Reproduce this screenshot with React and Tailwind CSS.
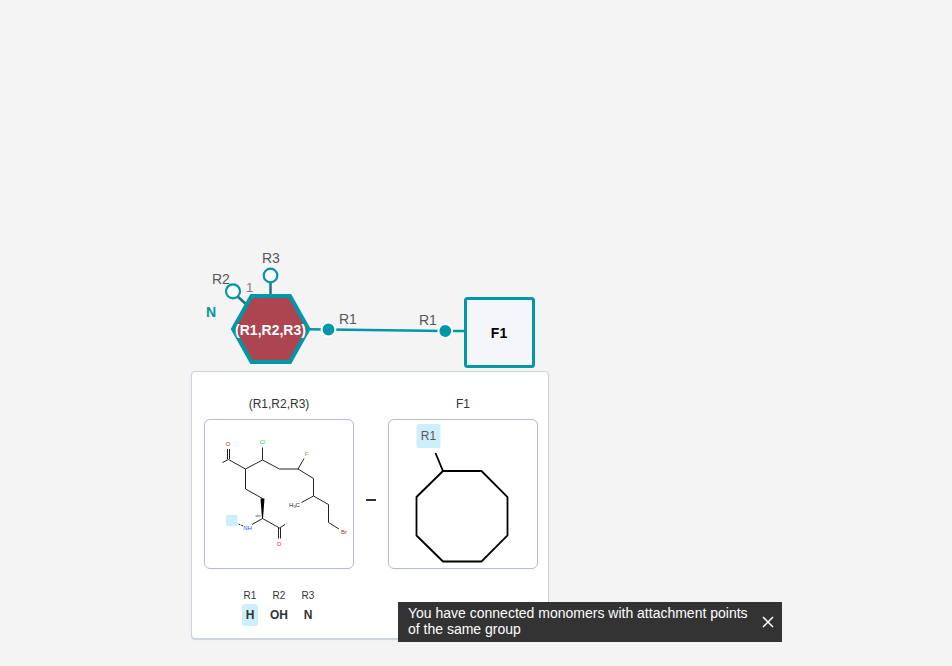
import React from 'react';

const font = 'font-["Liberation_Sans",Arial,sans-serif]';

const attachmentPoints = [
  { name: 'R1', group: 'H', active: true },
  { name: 'R2', group: 'OH', active: false },
  { name: 'R3', group: 'N', active: false },
];

function MonomerCanvas() {
  return (
    <svg className="absolute top-0 left-0 h-[380px] w-[560px]" viewBox="0 0 560 380" role="img" aria-label="Connected monomers">
      <g fill="none" stroke="#0097a8" strokeWidth="2.5">
        <path d="M307 329.300 L328 329.500 L445 331 H466" />
        <path d="M270.500 296 V280 M247 305 L236 295" stroke="#1d7584" />
        <circle cx="270.500" cy="275.500" r="6.800" fill="#fff" strokeWidth="2.200" />
        <circle cx="233" cy="291.300" r="7" fill="#fff" strokeWidth="2.200" />
      </g>
      <path d="M233 329 L251.500 296 H290 L308.500 329 L290 362 H251.500 Z" fill="#ad4551" stroke="#0097a8" strokeWidth="4" />
      <rect x="465.500" y="298.500" width="68" height="68" rx="2" fill="#f5f6f9" stroke="#0097a8" strokeWidth="3" />
      <g fill="#0097a8" stroke="#fff" strokeWidth="2">
        <circle cx="328.500" cy="329.500" r="6.900" />
        <circle cx="445.300" cy="331" r="6.900" />
      </g>
      <g fontSize="14" fill="#585858">
        <text x="262" y="263">R3</text>
        <text x="212" y="284">R2</text>
        <text x="339" y="324">R1</text>
        <text x="419" y="325">R1</text>
      </g>
      <text x="246" y="292" fontSize="13" fill="#7c7c7c">1</text>
      <g fontSize="14" fontWeight="700">
        <text x="206" y="317" fill="#0097a8">N</text>
        <text x="270.500" y="335" textAnchor="middle" fill="#fff">(R1,R2,R3)</text>
        <text x="499" y="338" textAnchor="middle" fill="#000">F1</text>
      </g>
    </svg>
  );
}

function ChainMolecule() {
  return (
    <svg className="size-full" viewBox="205 420 148 148" role="img" aria-label="Structure of (R1,R2,R3)">
      <rect x="226" y="515" width="11.500" height="11" rx="1" fill="#cceffb" />
      <g fill="none" stroke="#222" strokeWidth="1">
        <path d="M222.500 462.500 L228.500 459.500 L245.500 469 L262.500 460 L279.500 469 H298 L313.500 478.500 V496 L328.500 504.500 V522.500 L339 529" />
        <path d="M227.500 459 V449 M229.500 459 V449 M262.500 460 V447.500 M298 469 L304 458.500 M313.500 496 L301.500 502.500" />
        <path d="M245.500 469 V489 L262.500 498.500 M262.500 518.500 L252 524.500 M262.500 518.500 L279.500 528 L285 524.500 M278.500 528 V538.500 M280.500 528 V538.500" />
        <path d="M243 526 L238.500 524" strokeDasharray="2 1" />
      </g>
      <path d="M260.500 498.500 L264.500 498.500 L263 518.500 H262 Z" fill="#000" />
      <g fontSize="6" textAnchor="middle">
        <text x="228" y="446" fill="#ff0d0d">O</text>
        <text x="262.500" y="444" fill="#1fdc1f">Cl</text>
        <text x="306.500" y="456" fill="#78bc42">F</text>
        <text x="294.500" y="507" fill="#222">H<tspan fontSize="4" dy="1">3</tspan><tspan dy="-1">C</tspan></text>
        <text x="247.500" y="530" fill="#304ff7">NH</text>
        <text x="279" y="546" fill="#ff0d0d">O</text>
        <text x="344" y="534" fill="#9f3535">Br</text>
        <text x="258" y="517" fontSize="3" fill="#333">abs</text>
      </g>
    </svg>
  );
}

function RingMolecule() {
  return (
    <svg className="size-full" viewBox="389 420 148 148" role="img" aria-label="Structure of F1">
      <rect x="416.500" y="424" width="24" height="24" rx="2" fill="#cceffb" />
      <text x="428.500" y="440" fontSize="12" textAnchor="middle" fill="#585858">R1</text>
      <path d="M435.500 453 L443 471 H481.500 L507.500 497 V535.500 L481.500 561.500 H443 L416.500 535.500 V497 L443 471" fill="none" stroke="#000" strokeWidth="1.800" />
    </svg>
  );
}

function MonomerCard({ title, children }) {
  return (
    <figure className="flex flex-col gap-[7px]">
      <figcaption className="text-center text-xs leading-4">{title}</figcaption>
      <div className="size-[150px] overflow-hidden rounded-md border border-[#b4b9d6] bg-white">{children}</div>
    </figure>
  );
}

function BondPreview() {
  return (
    <section className="absolute top-[371px] left-[191px] rounded border border-[#cad3dd] bg-white pt-6 pr-2.5 pb-3 pl-3 text-[#333] shadow-[0_1px_1px_#cad3dd]">
      <div className="flex">
        <MonomerCard title="(R1,R2,R3)"><ChainMolecule /></MonomerCard>
        <div className="flex w-[34px] justify-center pt-[103px]">
          <span className="h-0.5 w-2.5 bg-[#333]" />
        </div>
        <MonomerCard title="F1"><RingMolecule /></MonomerCard>
      </div>
      <dl className="mt-5 flex w-[150px] justify-center">
        {attachmentPoints.map(({ name, group, active }) => (
          <div key={name} className="flex w-[29px] flex-col items-center gap-px">
            <dt className="text-[10px] leading-[14px]">{name}</dt>
            <dd className={`rounded-[3px] px-1 text-xs leading-[22px] font-bold ${active ? 'bg-[#cceffb]' : ''}`}>{group}</dd>
          </div>
        ))}
      </dl>
    </section>
  );
}

function Toast() {
  return (
    <div role="status" className="absolute top-[602px] left-[398px] flex w-96 items-center justify-between bg-[#333] pt-[3px] pr-[7px] pb-[5px] pl-2.5 text-sm leading-4 text-white">
      <p className="w-[340px]">You have connected monomers with attachment points of the same group</p>
      <button type="button" aria-label="Close" className="pt-0.5">
        <svg className="size-3.5" viewBox="0 0 14 14" fill="none" stroke="currentColor" strokeWidth="1.500">
          <path d="M2 2 L12 12 M12 2 L2 12" />
        </svg>
      </button>
    </div>
  );
}

export default function App() {
  return (
    <main className={`relative min-h-screen overflow-hidden bg-[#f4f4f4] ${font}`}>
      <MonomerCanvas />
      <BondPreview />
      <Toast />
    </main>
  );
}
